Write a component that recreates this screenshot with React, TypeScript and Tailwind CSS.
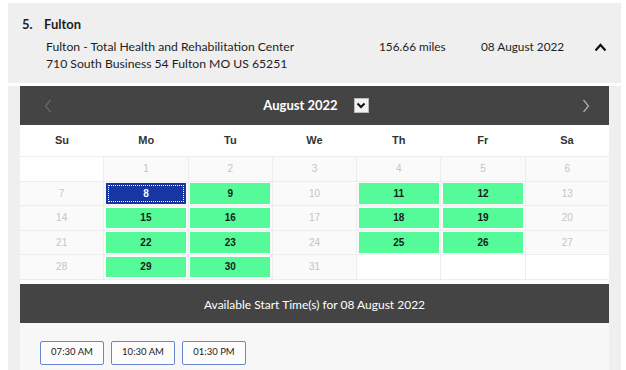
import React from "react";

type Cell = { day?: number; state: "empty" | "off" | "open" | "selected" };

const open = [9, 11, 12, 15, 16, 18, 19, 22, 23, 25, 26, 29, 30];

const buildWeeks = (): Cell[][] => {
  const cells: Cell[] = [{ state: "empty" }];
  for (let d = 1; d <= 31; d++) {
    cells.push({
      day: d,
      state: d === 8 ? "selected" : open.includes(d) ? "open" : "off",
    });
  }
  while (cells.length % 7 !== 0) cells.push({ state: "empty" });
  const weeks: Cell[][] = [];
  for (let i = 0; i < cells.length; i += 7) weeks.push(cells.slice(i, i + 7));
  return weeks;
};

const DayCell = ({ cell }: { cell: Cell }) => {
  if (cell.state === "empty") return <div className="bg-white" />;
  if (cell.state === "off")
    return (
      <div className="bg-[#fafafa] flex items-center justify-center text-[10px] text-[#c4c4c4]">
        {cell.day}
      </div>
    );
  if (cell.state === "selected")
    return (
      <div className="bg-[#fafafa] p-[1.5px] flex">
        <div className="flex-1 bg-[#1636a6] p-[2px] flex">
          <div className="flex-1 border border-dotted border-white flex items-center justify-center text-[10px] font-bold text-white">
            {cell.day}
          </div>
        </div>
      </div>
    );
  return (
    <div className="bg-[#fafafa] p-[1.5px] flex">
      <div className="flex-1 bg-[#55fb98] flex items-center justify-center text-[10px] font-bold text-[#1a1a1a]">
        {cell.day}
      </div>
    </div>
  );
};

export default function App() {
  const weeks = buildWeeks();
  const ui = "font-['Lato','Liberation_Sans',sans-serif]";
  const arial = "font-['Liberation_Sans',Arial,sans-serif]";

  return (
    <div className={`w-[626px] h-[370px] bg-white overflow-hidden ${ui}`}>
      {/* location summary */}
      <div className="ml-2 mr-[5px] mt-[3px] h-[80px] bg-[#efefef] pl-[14px] pt-[13px] text-[#1e1e1e]">
        <div className="flex text-[13px] font-bold leading-[17px]">
          <span className="w-[22px]">5.</span>
          <span>Fulton</span>
        </div>
        <div className="flex mt-[5px] pl-6 text-[12.2px] leading-[17px]">
          <div className="w-[333px]">
            <div>Fulton - Total Health and Rehabilitation Center</div>
            <div>710 South Business 54 Fulton MO US 65251</div>
          </div>
          <div className="w-[102px] text-[11.8px]">156.66 miles</div>
          <div className="w-[113px] text-[11.8px]">08 August 2022</div>
          <svg width="13" height="9" viewBox="0 0 13 9" className="mt-[5px]">
            <path d="M1.5 7.5 L6.5 2 L11.5 7.5" fill="none" stroke="#111" strokeWidth="2.2" />
          </svg>
        </div>
      </div>

      {/* calendar */}
      <div className="ml-2 mr-[5px] mt-[3px] h-[284px] bg-[#efefef] px-3">
        <div className="h-[39px] bg-[#444444] flex items-center pl-6 pr-[19px] text-white">
          <svg width="8" height="14" viewBox="0 0 8 14">
            <path d="M6.5 1 L1.5 7 L6.5 13" fill="none" stroke="#6a6a6a" strokeWidth="1.2" />
          </svg>
          <div className="flex-1 flex items-center justify-center pr-[2px]">
            <span className="text-[13px] font-bold">August 2022</span>
            <div className="ml-4 w-[15px] h-[15px] bg-[#f2f2f2] border border-[#bbb] flex items-center justify-center">
              <svg width="10" height="7" viewBox="0 0 10 7">
                <path d="M1.5 1.5 L5 5 L8.5 1.5" fill="none" stroke="#111" strokeWidth="2" />
              </svg>
            </div>
          </div>
          <svg width="8" height="14" viewBox="0 0 8 14">
            <path d="M1.5 1 L6.5 7 L1.5 13" fill="none" stroke="#b0b0b0" strokeWidth="1.2" />
          </svg>
        </div>

        <div className={`bg-white ${arial}`}>
          <div className="grid grid-cols-7 h-[31px] items-center text-[11px] font-bold text-[#333]">
            {["Su", "Mo", "Tu", "We", "Th", "Fr", "Sa"].map((d) => (
              <div key={d} className="text-center">
                {d}
              </div>
            ))}
          </div>
          <div className="grid grid-cols-7 auto-rows-[23.5px] gap-px bg-[#ededed] border-t border-[#ededed]">
            {weeks.flat().map((cell, i) => (
              <DayCell key={i} cell={cell} />
            ))}
          </div>
          <div className="h-[5px] bg-white border-t border-[#ededed]" />
        </div>

        <div className="h-[39px] bg-[#444444] flex items-center justify-center pt-[3px] text-[12px] text-white">
          Available Start Time(s) for 08 August 2022
        </div>
        <div className="bg-[#f7f7f7] h-full pt-[18px] pl-5 flex gap-[7px] items-start">
          {["07:30 AM", "10:30 AM", "01:30 PM"].map((t) => (
            <button
              key={t}
              className="w-[64px] h-[24px] border-[1.5px] border-[#6b84d4] rounded-[2px] bg-[#fcfcfc] text-[9.5px] text-[#222]"
            >
              {t}
            </button>
          ))}
        </div>
      </div>
    </div>
  );
}
